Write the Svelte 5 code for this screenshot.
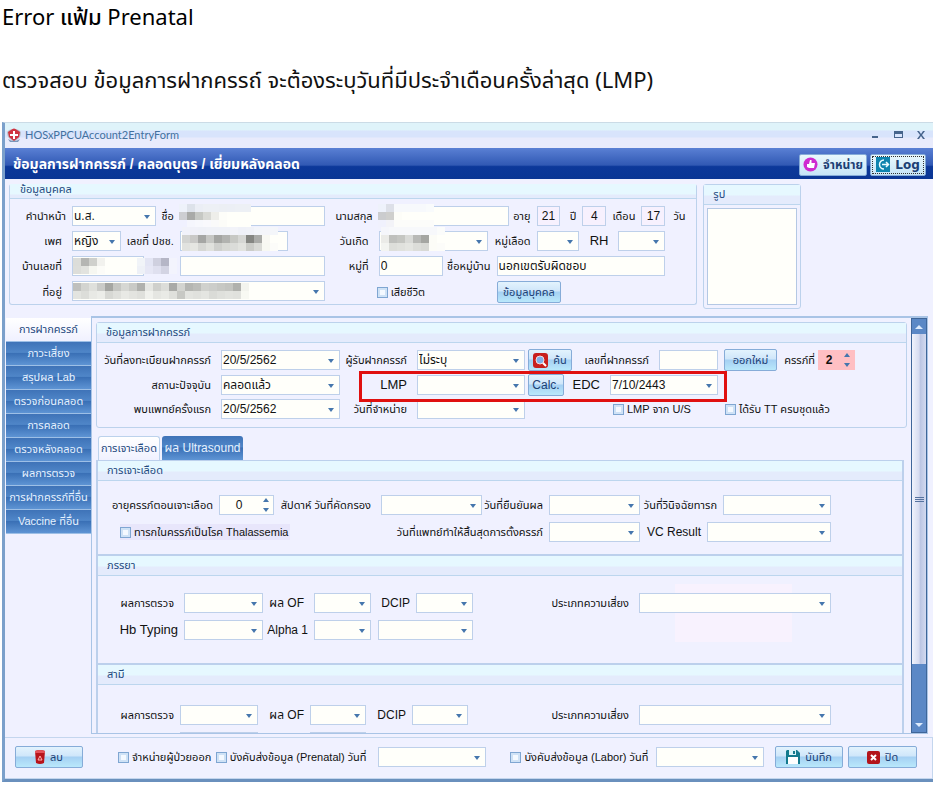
<script>
  const tabs = ['การฝากครรภ์', 'ภาวะเสี่ยง', 'สรุปผล Lab', 'ตรวจก่อนคลอด', 'การคลอด', 'ตรวจหลังคลอด', 'ผลการตรวจ', 'การฝากครรภ์ที่อื่น', 'Vaccine ที่อื่น'];

  // Masked personal data, one colour per 8px cell
  const masks = {
    name: [
      ['#eef2fa', '#dde2ea', '#ebeef5', '#edf0f5', '#edf0f5', '#eceff4', '#eceff5', '#edf0f5', '#edf0f5'],
      ['#cdced2', '#a9aaa8', '#c6c8c4', '#d9dad6', '#eeeeea', '#fdfdf9', '#fffffa', '#fffffa', '#fffffa'],
      ['#f0f1ff', '#f5f6fd', '#f7f8fd', '#f9f9fd', '#fafafa', '#fcfcf8', '#fffffa', '#fffffa', '#fffffa']
    ],
    surname: [
      ['#eef2fb', '#dde0e8', '#f7f9fc', '#f7f9fc', '#f7f9fc', '#f7f9fc', '#f9fbfc'],
      ['#cbccce', '#cfcfcd', '#fdfdf8', '#fffffa', '#fffffa', '#fffffa', '#fffffa'],
      ['#f0f1fd', '#f3f3f8', '#fcfcfa', '#fcfcfa', '#fcfcfa', '#fcfcfa', '#fcfcfa']
    ],
    pid: [
      ['#f1f2fa', '#f0f1f9', '#eff1f8', '#f0f2f8', '#f0f2f8', '#f0f2f8', '#f2f3f9', '#eff1f8', '#f0f2f8', '#f3f5fa', '#f4f5fa', '#f4f6fa'],
      ['#d3d4d2', '#c9c9c7', '#a5a6a4', '#c6c7c4', '#a4a5a2', '#b2b3b0', '#c7c8c4', '#d6d7d4', '#858682', '#aaaba8', '#f8f8f3', '#fffffa'],
      ['#e1e2df', '#e5e6e2', '#d6d7d4', '#e0e1dd', '#cfd0cd', '#d8d9d5', '#dbdcd9', '#e2e3df', '#cbccc8', '#d9dad6', '#f7f8f2', '#fcfcf9']
    ],
    birth: [
      ['#f5f6fb', '#f7f8fb', '#f7f8fb', '#f7f8fb', '#f7f8fb', '#f7f8fb', '#f7f8fb', '#fbfcfb'],
      ['#ebebe8', '#bfc0bd', '#c5c6c2', '#d9dad7', '#b8b9b6', '#a5a6a2', '#fcfcf7', '#fffffa'],
      ['#f3f4f1', '#dddeda', '#e0e1dd', '#e4e5e1', '#dcddd9', '#d8d9d5', '#fcfcf7', '#fcfcf9']
    ],
    house: [
      ['#dcddd9', '#b5b6b3', '#cfd0cc', '#f2f2ee', '#fffffa', '#fffffa', '#fffffa', '#fffffa', '#f1f4f8'],
      ['#dddeda', '#e2e3df', '#f6f7f1', '#fcfcf8', '#fffffa', '#fffffa', '#fffffa', '#fffffa', '#eef1f7']
    ],
    moo: [
      ['#e3e5f4', '#cfd0df', '#b5b6c6', '#f3f4fd'],
      ['#e6e7f5', '#dfe0ef', '#d3d4e3', '#f3f4fd']
    ],
    address: [
      ['#bfc0bd', '#d3d4d0', '#dfe0dc', '#cacbc8', '#a5a6a2', '#c5c6c2', '#d6d7d3', '#c9cac6', '#b0b1ad', '#e6e7e3', '#cfd0cc', '#dcddd9', '#a9aaa7', '#d3d4d0', '#b5b6b2', '#bcbdb9', '#d0d1cd', '#cccdca', '#c7c8c4', '#c3c4c0', '#b0b1ad', '#f3f4ee', '#fffffa', '#fffffa'],
      ['#e3e4e0', '#dcddd9', '#e8e9e5', '#ecede9', '#d7d8d4', '#dfe0dc', '#e8e9e5', '#e3e4e0', '#dfe0dc', '#f0f1ed', '#e5e6e2', '#e9eae6', '#dfe0dc', '#c7c8c4', '#e3e4e0', '#e0e1dd', '#e4e5e1', '#dadbd7', '#dfe0dc', '#e2e3df', '#e0e1dd', '#f8f9f3', '#fffffa', '#fffffa']
    ]
  };
</script>

{#snippet combo(id, label, value = '', cls = '')}
  {#if label}<label for={id} class={cls}>{label}</label>{/if}
  <select {id} aria-label={label ? undefined : id}><option>{value}</option></select>
{/snippet}

{#snippet text(id, label, value = '', cls = '')}
  <label for={id}>{label}</label>
  <input type="text" {id} {value} class={cls} />
{/snippet}

{#snippet check(id, label)}
  <span class="check"><input type="checkbox" {id} /><label for={id}>{label}</label></span>
{/snippet}

{#snippet spin(id, label, value)}
  <label for={id}>{label}</label>
  <span class="spin">
    <input type="number" {id} {value} />
    <svg viewBox="0 0 6 14" aria-hidden="true"><path d="M0 4 3 0l3 4zM0 10h6l-3 4z" /></svg>
  </span>
{/snippet}

{#snippet mosaic(rows, cls)}
  <svg class="mosaic {cls}" width={rows[0].length * 8} height={rows.length * 8} shape-rendering="crispEdges" aria-hidden="true">
    {#each rows as row, y}
      {#each row as fill, x}<rect x={x * 8} y={y * 8} width="8" height="8" {fill} />{/each}
    {/each}
  </svg>
{/snippet}

<main>
  <h1>Error <b>แฟ้ม</b> Prenatal</h1>
  <p class="intro">ตรวจสอบ ข้อมูลการฝากครรถ์ จะต้องระบุวันที่มีประจำเดือนครั้งล่าสุด (LMP)</p>

  <section class="window">
    <header class="titlebar">
      <svg width="16" height="16" viewBox="0 0 16 16" aria-hidden="true">
        <path d="M1 5q3-4 7-2 4-2 7 2 0 5-3 7l-4 3-4-3q-3-2-3-7z" fill="#b9bfca" />
        <path d="M5 3q3-3 6 0l3 2-1 5-5 4-5-4-1-5z" fill="#cf3340" />
        <path d="M7 4h2v3h3v2H9v3H7V9H4V7h3z" fill="#fff" />
        <path d="M2 12q6 4 12 0l-2 3H4z" fill="#7b96bb" />
      </svg>
      <span class="caption">HOSxPPCUAccount2EntryForm</span>
      <div class="winbtns">
        <button aria-label="Minimize"><svg width="10" height="10"><path d="M2 6h6v2H2z" /></svg></button>
        <button aria-label="Maximize"><svg width="10" height="10"><path fill-rule="evenodd" d="M1 1h9v7H1zM2 4v3h7V4z" /></svg></button>
        <button aria-label="Close"><svg width="10" height="10"><path d="M1 1h2l2 3 2-3h2L6 5l3 4H7L5 6 3 9H1l3-4z" /></svg></button>
      </div>
    </header>

    <div class="banner">
      <h2>ข้อมูลการฝากครรภ์ / คลอดบุตร / เยี่ยมหลังคลอด</h2>
      <button class="btn discharge">
        <svg width="15" height="15" viewBox="0 0 15 15" aria-hidden="true"><circle cx="7.500" cy="7.500" r="7" fill="#cf2bd0" /><path d="M4 7h2l1-4h1.500v3H12l-1 5H6l-2-1z" fill="#fff" /></svg>
        จำหน่าย
      </button>
      <button class="btn log">
        <svg width="14" height="15" viewBox="0 0 14 15" aria-hidden="true"><path fill="#0d84ae" d="M0 0h14v15H0z" /><path d="M8 3a4.500 4.500 0 1 0 0 9M6 7.500h6M10 5l2.500 2.500L10 10" fill="none" stroke="#e9fbff" stroke-width="1.500" /></svg>
        Log
      </button>
    </div>

    <div class="top">
      <fieldset class="box person">
        <div class="box-head">ข้อมูลบุคคล</div>
        <div class="fields">
          <div class="row p1">
            {@render combo('prefix', 'คำนำหน้า', 'น.ส.')}
            <label for="fname">ชื่อ</label>
            <span class="masked"><input type="text" id="fname" />{@render mosaic(masks.name, 'm-name')}</span>
            <label for="lname">นามสกุล</label>
            <span class="masked"><input type="text" id="lname" />{@render mosaic(masks.surname, 'm-name')}</span>
            {@render text('age-y', 'อายุ', '21', 'age')}
            {@render text('age-m', 'ปี', '4', 'age')}
            {@render text('age-d', 'เดือน', '17', 'age')}
            <span class="unit">วัน</span>
          </div>
          <div class="row p2">
            {@render combo('sex', 'เพศ', 'หญิง', 'wide')}
            <label for="pid">เลขที่ ปชช.</label>
            <span class="masked"><input type="text" id="pid" />{@render mosaic(masks.pid, 'm-pid')}</span>
            <label for="birth" class="wide">วันเกิด</label>
            <span class="masked"><select id="birth"><option></option></select>{@render mosaic(masks.birth, 'm-birth')}</span>
            {@render combo('blood', 'หมู่เลือด')}
            {@render combo('rh', 'RH', '', 'wide en')}
          </div>
          <div class="row p3">
            <label for="house" class="wide">บ้านเลขที่</label>
            <span class="masked"><input type="text" id="house" />{@render mosaic(masks.house, 'm-house')}</span>
            <span class="masked">{@render mosaic(masks.moo, 'm-house')}</span>
            <input type="text" aria-label="บ้าน" />
            <label for="moo" class="wide">หมู่ที่</label>
            <input type="text" id="moo" value="0" />
            {@render text('village', 'ชื่อหมู่บ้าน', 'นอกเขตรับผิดชอบ')}
          </div>
          <div class="row p4">
            <label for="addr" class="wide">ที่อยู่</label>
            <span class="masked"><select id="addr"><option></option></select>{@render mosaic(masks.address, 'm-house')}</span>
            <i></i>
            {@render check('dead', 'เสียชีวิต')}
            <button class="btn">ข้อมูลบุคคล</button>
          </div>
        </div>
      </fieldset>
      <div class="box photo">
        <div class="box-head">รูป</div>
        <div class="frame"></div>
      </div>
    </div>

    <div class="body">
      <nav class="tabs">
        {#each tabs as t, i}
          <button class:on={i === 0}>{t}</button>
        {/each}
      </nav>

      <div class="pane">
        <div class="content">
          <fieldset class="box anc">
            <div class="box-head">ข้อมูลการฝากครรภ์</div>
            <div class="fields">
              <div class="row a1">
                {@render combo('reg', 'วันที่ลงทะเบียนฝากครรภ์', '20/5/2562', 'wide')}
                {@render combo('by', 'ผู้รับฝากครรภ์', 'ไม่ระบุ', 'wide')}
                <button class="btn find">
                  <svg width="15" height="15" viewBox="0 0 15 15" aria-hidden="true"><rect width="15" height="15" rx="3" fill="#c8201e" /><circle cx="7" cy="7" r="4" fill="#7fb0ea" stroke="#f3dede" /><path d="m10 10 3 3" stroke="#fff" stroke-width="2" /></svg>
                  ค้น
                </button>
                <label for="no" class="wide">เลขที่ฝากครรภ์</label>
                <input type="text" id="no" />
                <button class="btn new">ออกใหม่</button>
                <span class="spinrow">{@render spin('preg', 'ครรภ์ที่', 2)}</span>
              </div>
              <div class="row a2">
                {@render combo('status', 'สถานะปัจจุบัน', 'คลอดแล้ว', 'wide')}
                {@render combo('lmp', 'LMP', '', 'wide en')}
                <button class="btn calc">Calc.</button>
                {@render combo('edc', 'EDC', '7/10/2443', 'wide en')}
              </div>
              <div class="row a3">
                {@render combo('first', 'พบแพทย์ครั้งแรก', '20/5/2562', 'wide')}
                {@render combo('dc', 'วันที่จำหน่าย', '', 'wide')}
                <i></i>
                {@render check('us', 'LMP จาก U/S')}
                {@render check('tt', 'ได้รับ TT ครบชุดแล้ว')}
              </div>
            </div>
            <div class="highlight"></div>
          </fieldset>

          <div class="subtabs">
            <button class="on">การเจาะเลือด</button>
            <button>ผล Ultrasound</button>
          </div>
          <div class="sheet">
            <section class="blood">
              <h3>การเจาะเลือด</h3>
              <div class="row b1">
                {@render spin('weeks', 'อายุครรภ์ตอนเจาะเลือด', 0)}
                {@render combo('screen', 'สัปดาห์  วันที่คัดกรอง', '', 'wide')}
                {@render combo('confirm', 'วันที่ยืนยันผล')}
                {@render combo('diag', 'วันที่วินิจฉัยทารก')}
              </div>
              <div class="row b2">
                <i></i>
                {@render check('thal', 'ทารกในครรภ์เป็นโรค Thalassemia')}
                {@render combo('term', 'วันที่แพทย์ทำให้สิ้นสุดการตั้งครรภ์')}
                {@render combo('vc', 'VC Result', '', 'mid')}
              </div>
            </section>
            <section class="wife">
              <h3>ภรรยา</h3>
              <div class="row w1">
                {@render combo('w-res', 'ผลการตรวจ', '', 'wide')}
                {@render combo('w-of', 'ผล OF', '', 'wide mid')}
                {@render combo('w-dcip', 'DCIP', '', 'mid')}
                {@render combo('w-risk', 'ประเภทความเสี่ยง', '', 'wide')}
              </div>
              <div class="row w2">
                {@render combo('w-hb', 'Hb Typing', '', 'en')}
                {@render combo('w-alpha', 'Alpha 1', '', 'mid')}
                <i></i>
                {@render combo('w-alpha2', '')}
              </div>
            </section>
            <section class="husband">
              <h3>สามี</h3>
              <div class="row h1">
                {@render combo('h-res', 'ผลการตรวจ')}
                {@render combo('h-of', 'ผล OF', '', 'mid')}
                {@render combo('h-dcip', 'DCIP', '', 'mid')}
                {@render combo('h-risk', 'ประเภทความเสี่ยง', '', 'wide')}
              </div>
              <div class="row h1">
                <i></i>
                {@render combo('h-hb', '')}
                <i></i>
                {@render combo('h-alpha', '')}
              </div>
            </section>
          </div>
        </div>
        <div class="scroll">
          <button aria-label="Scroll up"><svg width="8" height="4"><path d="M0 4 4 0l4 4z" /></svg></button>
          <div class="thumb"><span></span></div>
          <button aria-label="Scroll down"><svg width="8" height="4"><path d="M0 0h8L4 4z" /></svg></button>
        </div>
      </div>
    </div>

    <footer class="row foot">
      <i></i>
      <button class="btn">
        <svg width="10" height="14" viewBox="0 0 10 14" aria-hidden="true"><path d="M0 1q5-2 10 0L9 13q-4 2-8 0z" fill="#b8141b" /><path d="M0 1q5-2 10 0v2H0z" fill="#e4525a" /><path d="m5 6 2 4H3z" fill="none" stroke="#ffb3b3" /></svg>
        ลบ
      </button>
      <i></i>
      {@render check('out', 'จำหน่ายผู้ป่วยออก')}
      {@render check('pre', 'บังคับส่งข้อมูล (Prenatal) วันที่')}
      {@render combo('pre-date', '')}
      <i></i>
      {@render check('lab', 'บังคับส่งข้อมูล (Labor) วันที่')}
      {@render combo('lab-date', '')}
      <i></i>
      <button class="btn">
        <svg width="14" height="15" viewBox="0 0 14 15" aria-hidden="true"><path d="M1 0h10l3 3v11H0V1z" fill="#137a8e" /><path d="M3 0h7v5H3z" fill="#d8f3f8" /><path d="M7 1h2v3H7z" fill="#137a8e" /><path d="M2 7h10v7H2z" fill="#fff" /></svg>
        บันทึก
      </button>
      <i></i>
      <button class="btn">
        <svg width="13" height="13" viewBox="0 0 13 13" aria-hidden="true"><rect width="13" height="13" rx="2" fill="#b3141b" /><path d="m4 4 5 5m0-5-5 5" stroke="#fff" stroke-width="2" /></svg>
        ปิด
      </button>
    </footer>
  </section>
</main>

<style>
  :global(body) { background: #fff; }
  main {
    padding: 0 12px 11px 2px;
    font-family: "Liberation Sans", "Noto Sans Thai", sans-serif;
    font-size: 12px;
    color: #111;
  }
  * { box-sizing: border-box; }
  h1, h2, h3, p { margin: 0; font-weight: normal; }
  h1 { font: 22px/32px "Noto Sans", "Noto Sans Thai", sans-serif; color: #000; }
  h1 b { font-weight: 500; }
  .intro { font: 22px/32px "Noto Sans", "Noto Sans Thai", sans-serif; padding: 31px 0 27px; white-space: nowrap; }

  button, input, select { font: inherit; color: inherit; margin: 0; min-width: 0; }
  button { padding: 0; border: 0; white-space: nowrap; }

  .window {
    border-left: 3px solid #7ba0cb;
    border-bottom: 3px solid #6a90bd;
    border-top: 1px solid #cbdbe6;
    background: #f0f1ff;
    overflow: hidden;
  }

  .titlebar {
    display: flex;
    align-items: center;
    height: 25px;
    padding: 0 7px 2px 1px;
    gap: 3px;
    background: linear-gradient(#dff3fa 0 7px, #d8e4fc 8px 14px, #e8ebfc 15px);
    color: #43719f;
  }
  .caption { flex: 1; font: 11px Lato, sans-serif; }
  .winbtns { display: flex; gap: 13px; }
  .winbtns button { background: none; height: 10px; width: 10px; display: flex; }
  .winbtns path { fill: #46648c; }

  .banner {
    display: flex;
    align-items: center;
    gap: 3px;
    height: 31px;
    padding: 2px 7px 0 8px;
    background: linear-gradient(#5a80d4, #3159b4 55%, #0c389a 60%, #0a3694);
  }
  h2 { flex: 1; color: #fff; font-size: 14px; font-weight: bold; white-space: nowrap; }

  .btn {
    display: flex;
    align-items: center;
    justify-content: center;
    gap: 5px;
    height: 22px;
    border: 1px solid #86acd8;
    border-radius: 2px;
    background: linear-gradient(#e3f3fd, #cfe6fa 45%, #a5d0f3 50%, #b9e8fb);
    color: #1c4074;
    font-size: 11px;
  }
  .banner .btn { font-weight: bold; font-size: 12px; background: linear-gradient(#e9f8fd, #c6e4f7); }
  .discharge { width: 68px; }
  .log { width: 56px; outline: 1px dotted #333; outline-offset: -3px; }
  .banner .log { font: bold 12px "DejaVu Sans", sans-serif; }

  .top { display: flex; align-items: flex-start; padding: 5px 132px 7px 4px; gap: 6px; }
  .box {
    position: relative;
    margin: 0;
    padding: 0;
    min-width: 0;
    border: 1px solid #bcd2ec;
    border-radius: 3px;
  }
  .box-head, h3 {
    height: 20px;
    padding-left: 9px;
    font-size: 11px;
    line-height: 18px;
    color: #1f4a80;
    border-bottom: 1px solid #bcd6ee;
    background: linear-gradient(#e6f8ff 0 10px, #e4ebfc 11px);
  }
  .person { flex: 689; border-top: 0; }
  .person .box-head { height: 15px; line-height: 10px; padding-left: 10px; }
  .person .fields { padding: 7px 0 3px; }
  .photo { flex: 96; }
  .frame { height: 97px; margin: 3px; border: 1px solid #b4c8e4; background: #fffffa; }

  .fields { display: flex; flex-direction: column; gap: 5px; }
  .row { display: grid; align-items: center; height: 20px; }
  .row label, .unit { white-space: nowrap; justify-self: end; padding-right: 6px; font-size: 11px; line-height: 16px; }
  .row label.wide { padding-right: 10px; }
  .row .unit { justify-self: start; padding: 0 0 0 8px; }
  .row label.mid { font-size: 12px; }
  .row label.en { font-size: 13px; }

  select, input[type="text"], input[type="number"] {
    width: 100%;
    height: 20px;
    padding: 0 1px 1px;
    border: 1px solid #bed0ea;
    border-radius: 0;
    background: #fffffa;
    appearance: none;
    font-size: 12px;
    line-height: 16px;
    outline: 0;
  }
  select {
    background: #fffffa url("data:image/svg+xml,%3Csvg xmlns='http://www.w3.org/2000/svg' width='6' height='4'%3E%3Cpath d='M0 0h6L3 4z' fill='%234576ad'/%3E%3C/svg%3E") no-repeat right 5px top 8px;
  }
  .row .age { background: #f7f1fe; text-align: center; }

  .p1 { grid-template-columns: 62fr 84fr 24fr 145fr 54fr 130fr 28fr 24fr 22fr 24fr 35fr 24fr 31fr; }
  .p2 { grid-template-columns: 62fr 49fr 59fr 108fr 91fr 109fr 49fr 43fr 39fr 47fr 31fr; }
  .p3 { grid-template-columns: 62fr 72fr 36fr 145fr 54fr 64fr 54fr 169fr 31fr; }
  .p4 { grid-template-columns: 62fr 253fr 52fr 120fr 65fr 135fr; }
  .a1 { grid-template-columns: 124fr 119fr 77fr 108fr 47fr 87fr 59fr 59fr 78fr 51fr; }
  .a2 { grid-template-columns: 124fr 119fr 77fr 108fr 39fr 46fr 108fr 188fr; }
  .a3 { grid-template-columns: 124fr 119fr 77fr 108fr 88fr 112fr 181fr; }
  .b1 { grid-template-columns: 121fr 55fr 107fr 101fr 67fr 91fr 83fr 108fr 71fr; }
  .b2 { grid-template-columns: 22fr 180fr 249fr 91fr 67fr 124fr 71fr; }
  .w1 { grid-template-columns: 86fr 79fr 51fr 57fr 45fr 57fr 166fr 192fr 71fr; }
  .w2 { grid-template-columns: 86fr 79fr 51fr 57fr 7fr 95fr 429fr; }
  .h1 { grid-template-columns: 82fr 78fr 52fr 56fr 46fr 56fr 171fr 192fr 71fr; }
  .foot { grid-template-columns: 10fr 68fr 35fr 98fr 162fr 109fr 24fr 146fr 108fr 11fr 68fr 5fr 69fr 15fr; }
  .row > * { min-width: 0; }

  .masked { position: relative; display: flex; align-self: stretch; }
  .mosaic { position: absolute; left: 0; top: 2px; }
  .m-name { left: -1px; top: -2px; }
  .m-pid { left: 2px; top: -4px; }
  .m-birth { left: 2px; top: -4px; }
  .m-house { left: 1px; }

  .check { display: flex; align-items: center; gap: 3px; justify-self: start; }
  .check label { padding: 0; }
  .check input {
    appearance: none;
    flex: none;
    width: 11px;
    height: 11px;
    border: 1px solid #7fa6d2;
    background: #f4f9ff;
    box-shadow: inset 0 0 0 2px #cfe2f6;
  }

  .body { display: flex; align-items: flex-start; padding: 0 5px 3px 1px; }
  .tabs { display: flex; flex-direction: column; width: 85px; padding-top: 2px; }
  .tabs button, .subtabs button {
    height: 24px;
    color: #e6f2ff;
    font-size: 11px;
    border-bottom: 1px solid #9dbfe6;
    background: linear-gradient(#3f73b8, #4f86c8 45%, #3a70b6 50%, #5e94d4);
  }
  .tabs button.on, .subtabs button.on { background: linear-gradient(#fff, #f0f1ff); color: #1f4a80; }
  .pane {
    flex: 1;
    min-width: 0;
    display: flex;
    height: 418px;
    border: 1px solid #a9c4e6;
    border-top-width: 2px;
    overflow: hidden;
  }
  .content { flex: 1; min-width: 0; padding: 4px 4px 0; }
  .anc { height: 106px; }
  .anc .fields { padding-top: 6px; }
  .find { margin-left: 3px; }
  .new { margin-left: 6px; }
  .calc { margin-left: 3px; font-size: 12px; }
  .spinrow { display: grid; grid-template-columns: 41fr 37fr; align-items: center; }
  .row .spinrow label { padding-right: 3px; }
  .spin { position: relative; display: flex; }
  .spin input { text-align: center; padding-right: 16px; appearance: textfield; }
  .spin input::-webkit-inner-spin-button { appearance: none; }
  .spin svg { position: absolute; right: 5px; top: 3px; width: 6px; height: 14px; fill: #4576ad; }
  .spinrow .spin input { background: #ffbfc3; border-color: #ffbfc3; font-weight: bold; }
  .highlight { position: absolute; left: 32.4%; width: 45.5%; top: 48px; height: 31px; border: 3px solid #e01010; }

  .subtabs { display: flex; gap: 2px; padding: 8px 0 0 2px; }
  .subtabs button { width: 81px; border: 0; border-radius: 3px 3px 0 0; font-size: 12px; }
  .subtabs button.on { width: 62px; border: 1px solid #bcd2ec; border-bottom: 0; font-size: 11px; }
  .sheet { margin-right: 3px; border: 2px solid #bcd0ec; border-width: 1px 2px 0; }
  section.blood, section.wife { border-bottom: 2px solid #bcd0ec; }
  .blood { height: 95px; }
  .blood h3 { margin-bottom: 14px; }
  .b1, .w1 { margin-bottom: 7px; }
  .wife {
    height: 109px;
    background: linear-gradient(#f8f2fe, #f8f2fe) no-repeat 84% 28px / 117px 58px;
  }
  .wife h3 { margin-bottom: 17px; }
  .husband h3 { margin-bottom: 20px; }
  .husband .row { margin-bottom: 7px; }
  .b2 .check { background: #e8e6fb; padding-right: 2px; }

  .scroll { width: 16px; display: flex; flex-direction: column; background: #5b88c6; border: 1px solid #3f6699; }
  .scroll button { height: 15px; background: none; display: flex; align-items: center; justify-content: center; }
  .scroll path { fill: #dceafc; }
  .thumb {
    height: 330px;
    margin-bottom: auto;
    display: flex;
    align-items: center;
    justify-content: center;
    background: linear-gradient(90deg, #f0f3fc, #d6dcf0 50%, #bcc6e4 60%, #d3daf0);
  }
  .thumb span { width: 9px; height: 5px; border: 1px solid #56739f; border-width: 1px 0; background: linear-gradient(#0000 1px, #56739f 1px 2px, #0000 2px); }

  .foot { height: 42px; padding-bottom: 2px; border: 1px solid #c4d6ee; border-width: 1px 1px 1px 0; }
</style>
